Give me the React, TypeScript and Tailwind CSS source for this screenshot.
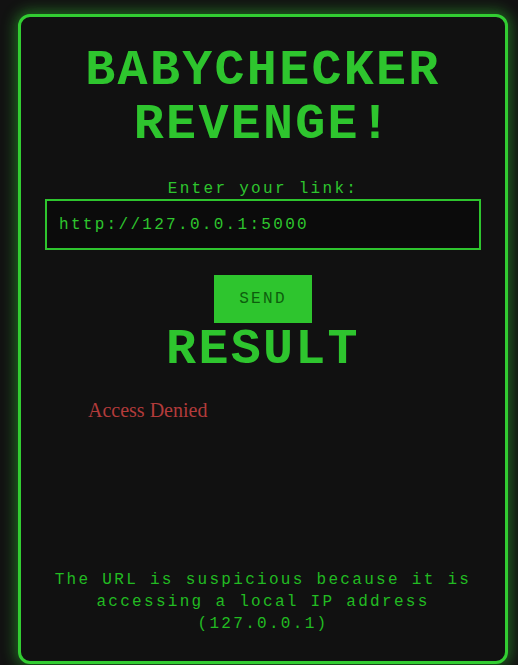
import React, { useState } from 'react';

const mono = 'font-["Liberation_Mono","Courier_New",monospace]';

const App: React.FC = () => {
  const [link, setLink] = useState('http://127.0.0.1:5000');

  return (
    <div className="min-h-[665px] w-full bg-[#121212] pt-[14px]">
      <div
        className={`ml-[18px] flex h-[650px] w-[490px] flex-col rounded-[12px] border-[3px] border-[#32cd32] bg-[#111111] px-6 pt-[27px] pb-[26px] shadow-[0_0_14px_3px_rgba(50,205,50,0.45)] ${mono} tracking-[2.3px] text-[#2ec52e]`}
      >
        <h1 className="text-center text-[50px] font-bold leading-[54px]">BABYCHECKER REVENGE!</h1>

        <label className="mt-[27px] block text-center text-[16px] leading-[20px]">Enter your link:</label>
        <input
          type="text"
          value={link}
          onChange={(e) => setLink(e.target.value)}
          className="h-[51px] w-full border-2 border-[#2ec52e] bg-[#0b0b0b] px-3 text-[16px] text-[#2ec52e] outline-none"
        />

        <div className="mt-[25px] flex justify-center">
          <button className="flex h-[48px] w-[98px] items-center justify-center bg-[#2ec52e] text-[16px] text-[#0d5e0d]">
            SEND
          </button>
        </div>

        <h2 className="text-center text-[50px] font-bold leading-[54px]">RESULT</h2>

        <p className='mt-[21px] pl-[43px] font-["Liberation_Serif","Times_New_Roman",serif] text-[20px] leading-[24px] tracking-normal text-[#b33b3b]'>
          Access Denied
        </p>

        <p className="mt-auto text-center text-[16px] leading-[22px] text-[#22bb22]">
          The URL is suspicious because it is accessing a local IP address (127.0.0.1)
        </p>
      </div>
    </div>
  );
};

export default App;
